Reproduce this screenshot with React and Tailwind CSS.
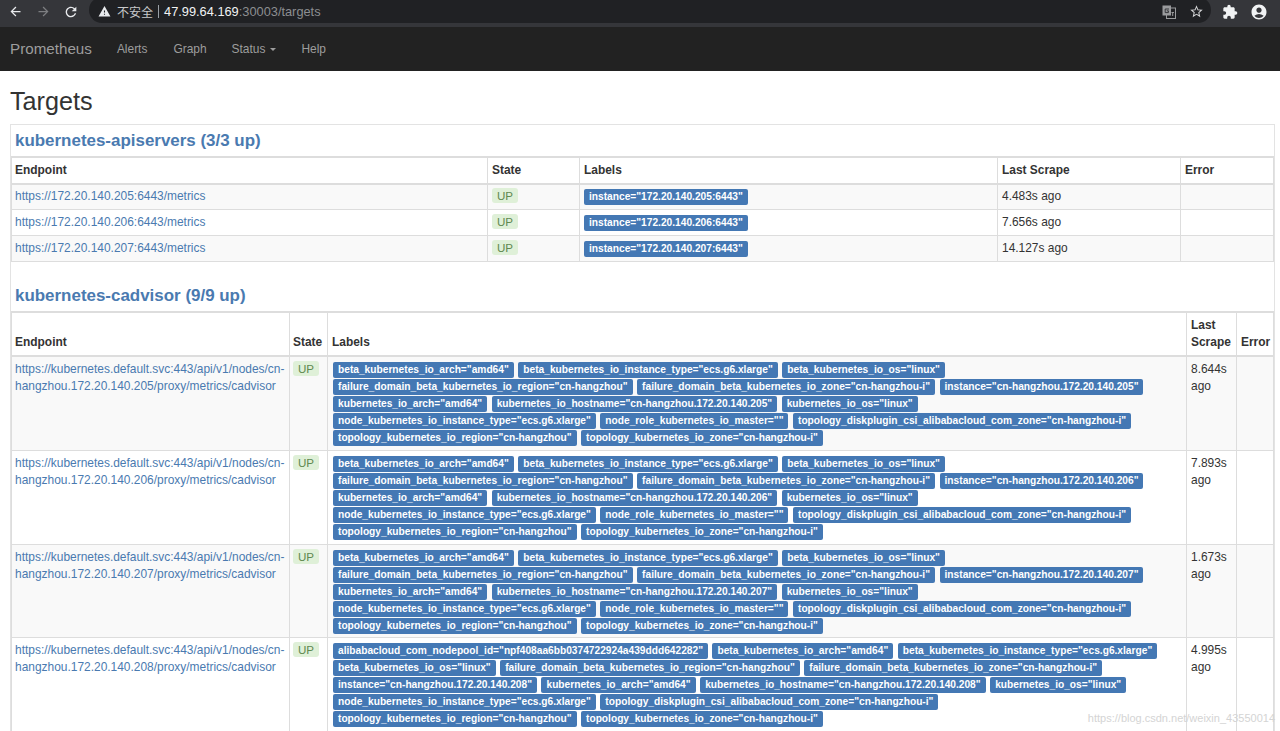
import { MdArrowBack, MdArrowForward, MdRefresh, MdWarning, MdStarBorder, MdExtension, MdAccountCircle } from "react-icons/md";

const api = [
  { ip: "172.20.140.205", ago: "4.483s ago" },
  { ip: "172.20.140.206", ago: "7.656s ago" },
  { ip: "172.20.140.207", ago: "14.127s ago" },
];

const nodeLabels = (ip) => [
  'beta_kubernetes_io_arch="amd64"',
  'beta_kubernetes_io_instance_type="ecs.g6.xlarge"',
  'beta_kubernetes_io_os="linux"',
  'failure_domain_beta_kubernetes_io_region="cn-hangzhou"',
  'failure_domain_beta_kubernetes_io_zone="cn-hangzhou-i"',
  `instance="cn-hangzhou.${ip}"`,
  'kubernetes_io_arch="amd64"',
  `kubernetes_io_hostname="cn-hangzhou.${ip}"`,
  'kubernetes_io_os="linux"',
  'node_kubernetes_io_instance_type="ecs.g6.xlarge"',
  'node_role_kubernetes_io_master=""',
  'topology_diskplugin_csi_alibabacloud_com_zone="cn-hangzhou-i"',
  'topology_kubernetes_io_region="cn-hangzhou"',
  'topology_kubernetes_io_zone="cn-hangzhou-i"',
];

const cadvisor = [
  { ip: "172.20.140.205", ago: "8.644s", h: "h-[95px] bg-[#f9f9f9]", labels: nodeLabels("172.20.140.205") },
  { ip: "172.20.140.206", ago: "7.893s", h: "h-[94px]", labels: nodeLabels("172.20.140.206") },
  { ip: "172.20.140.207", ago: "1.673s", h: "h-[93px] bg-[#f9f9f9]", labels: nodeLabels("172.20.140.207") },
  {
    ip: "172.20.140.208",
    ago: "4.995s",
    h: "h-[94px]",
    labels: [
      'alibabacloud_com_nodepool_id="npf408aa6bb0374722924a439ddd642282"',
      'beta_kubernetes_io_arch="amd64"',
      'beta_kubernetes_io_instance_type="ecs.g6.xlarge"',
      'beta_kubernetes_io_os="linux"',
      'failure_domain_beta_kubernetes_io_region="cn-hangzhou"',
      'failure_domain_beta_kubernetes_io_zone="cn-hangzhou-i"',
      'instance="cn-hangzhou.172.20.140.208"',
      'kubernetes_io_arch="amd64"',
      'kubernetes_io_hostname="cn-hangzhou.172.20.140.208"',
      'kubernetes_io_os="linux"',
      'node_kubernetes_io_instance_type="ecs.g6.xlarge"',
      'topology_diskplugin_csi_alibabacloud_com_zone="cn-hangzhou-i"',
      'topology_kubernetes_io_region="cn-hangzhou"',
      'topology_kubernetes_io_zone="cn-hangzhou-i"',
    ],
  },
];

function Label({ text }) {
  return (
    <span className="inline-block h-[16px] rounded-[2px] bg-[#4478b4] px-[5px] text-[10.2px] leading-[16px] font-bold whitespace-nowrap text-white">
      {text}
    </span>
  );
}

function Up() {
  return (
    <span className="inline-block h-[15px] rounded-[3px] bg-[#dff0d8] px-[5px] text-[11.6px] leading-[15px] text-[#5f8a50]">UP</span>
  );
}

function Th({ children, className = "pl-[4px]" }) {
  return <th className={`border border-b-2 border-[#dddddd] pt-0 pr-[3px] pb-[4px] text-left align-bottom leading-[17px] font-bold ${className}`}>{children}</th>;
}

function Td({ children, className = "" }) {
  return <td className={`border border-[#dddddd] align-top ${className}`}>{children}</td>;
}

function TranslateIcon() {
  return (
    <svg width="14" height="14" viewBox="0 0 14 14" className="text-[#9a9b9d]">
      <rect x="4.5" y="3" width="9" height="10.5" fill="none" stroke="currentColor" strokeWidth="1" />
      <rect x="0.5" y="0.5" width="8.5" height="10" fill="currentColor" />
      <path d="M7 4 H3.2 V7.6 H6.4 V5.8 H4.8" fill="none" stroke="#35363a" strokeWidth="1" />
      <path d="M9.5 7.5 H12 M10.7 7.5 V11" stroke="currentColor" strokeWidth="1" fill="none" />
    </svg>
  );
}

export default function App() {
  return (
    <div className="h-[731px] w-[1280px] overflow-hidden bg-white font-['Liberation_Sans',Arial,sans-serif] text-[11.95px] text-[#333333]">
      {/* browser chrome, the top of the window is cut off in the shot */}
      <div className="h-[27px] overflow-hidden bg-[#35363a]">
        <div className="flex h-[23px] items-end">
          <div className="flex h-[23px] items-center">
            <MdArrowBack className="ml-[8px] text-[#e8eaed]" size={15} />
            <MdArrowForward className="ml-[13px] text-[#7d7e81]" size={15} />
            <MdRefresh className="ml-[12px] text-[#e8eaed]" size={16} />
          </div>
          <div className="ml-[10px] flex h-[26px] w-[1122px] items-center rounded-full bg-[#202124] pt-[3px] pl-[9px]">
            <MdWarning className="text-[#e8eaed]" size={13} />
            <span className="ml-[6px] font-['Noto_Sans_CJK_SC',sans-serif] text-[12px] text-[#c8c9cb]">不安全</span>
            <span className="mx-[5px] h-[13px] w-px bg-[#9aa0a6]" />
            <span className="text-[12.8px] text-[#f1f3f4]">47.99.64.169</span>
            <span className="text-[12.8px] text-[#8c8e91]">:30003/targets</span>
            <div className="ml-auto flex items-center gap-[13px] pr-[7px]">
              <TranslateIcon />
              <MdStarBorder className="text-[#d5d6d8]" size={15} />
            </div>
          </div>
          <div className="flex h-[23px] items-center">
            <MdExtension className="ml-[11px] text-[#f1f3f4]" size={16} />
            <MdAccountCircle className="ml-[12px] text-[#f1f3f4]" size={18} />
          </div>
        </div>
      </div>

      {/* navbar */}
      <nav className="flex h-[44px] items-center bg-[#222222] pl-[10px] text-[#9d9d9d]">
        <span className="text-[15.2px]">Prometheus</span>
        <span className="mt-px ml-[25px]">Alerts</span>
        <span className="mt-px ml-[26px]">Graph</span>
        <span className="mt-px ml-[25px] flex items-center">
          Status
          <span className="ml-[5px] h-0 w-0 border-x-[3px] border-t-[3px] border-x-transparent border-t-[#9d9d9d]" />
        </span>
        <span className="mt-px ml-[25px]">Help</span>
      </nav>

      <div className="relative pr-[5px] pl-[10px]">
        <h1 className="pt-[15px] pb-[8px] text-[25.2px] leading-[30px] font-normal">Targets</h1>

        <div className="border-x border-t border-[#e3e3e3]">
          <h2 className="h-[32px] border-b border-[#dddddd] pl-[4px] text-[16.95px] leading-[31px] font-bold text-[#4a7ab0]">kubernetes-apiservers (3/3 up)</h2>
          <table className="w-full table-fixed border-collapse">
            <colgroup>
              <col className="w-[476px]" />
              <col className="w-[92px]" />
              <col className="w-[418px]" />
              <col className="w-[183px]" />
              <col />
            </colgroup>
            <thead>
              <tr className="h-[26px]">
                <Th className="pl-[3px]">Endpoint</Th>
                <Th>State</Th>
                <Th>Labels</Th>
                <Th>Last Scrape</Th>
                <Th>Error</Th>
              </tr>
            </thead>
            <tbody>
              {api.map((r, i) => (
                <tr key={r.ip} className={`h-[26px] ${i % 2 === 0 ? "bg-[#f9f9f9]" : ""}`}>
                  <Td className="pt-px pl-[3px] !align-middle text-[#4a7ab0]">{`https://${r.ip}:6443/metrics`}</Td>
                  <Td className="pt-px pl-[4px] !align-middle"><Up /></Td>
                  <Td className="pt-px pl-[4px] !align-middle"><Label text={`instance="${r.ip}:6443"`} /></Td>
                  <Td className="pt-px pl-[4px] !align-middle">{r.ago}</Td>
                  <Td />
                </tr>
              ))}
            </tbody>
          </table>

          <h2 className="mt-[16px] h-[34px] border-b border-[#dddddd] pl-[4px] text-[16.95px] leading-[35px] font-bold text-[#4a7ab0]">kubernetes-cadvisor (9/9 up)</h2>
          <table className="w-full table-fixed border-collapse">
            <colgroup>
              <col className="w-[278px]" />
              <col className="w-[38px]" />
              <col className="w-[859px]" />
              <col className="w-[50px]" />
              <col />
            </colgroup>
            <thead>
              <tr className="h-[43px]">
                <Th className="pl-[3px]">Endpoint</Th>
                <Th className="pl-[3px]">State</Th>
                <Th>Labels</Th>
                <Th>Last Scrape</Th>
                <Th>Error</Th>
              </tr>
            </thead>
            <tbody>
              {cadvisor.map((r) => (
                <tr key={r.ip} className={r.h}>
                  <Td className="px-[3px] pt-[4px] leading-[17px] text-[#4a7ab0]">
                    {`https://kubernetes.default.svc:443/api/v1/nodes/cn-hangzhou.${r.ip}/proxy/metrics/cadvisor`}
                  </Td>
                  <Td className="pt-[4px] pl-[3px]"><Up /></Td>
                  <Td className="pt-[5px] pr-[6px] pl-[5px]">
                    <div className="flex flex-wrap gap-x-[4.5px] gap-y-[1px]">
                      {r.labels.map((l) => <Label key={l} text={l} />)}
                    </div>
                  </Td>
                  <Td className="px-[4px] pt-[4px] leading-[17px]">{`${r.ago} ago`}</Td>
                  <Td />
                </tr>
              ))}
            </tbody>
          </table>
        </div>

        <span className="absolute top-[639px] right-[5px] text-[11px] text-[#d4d4d4]">https://blog.csdn.net/weixin_43550014</span>
      </div>
    </div>
  );
}
